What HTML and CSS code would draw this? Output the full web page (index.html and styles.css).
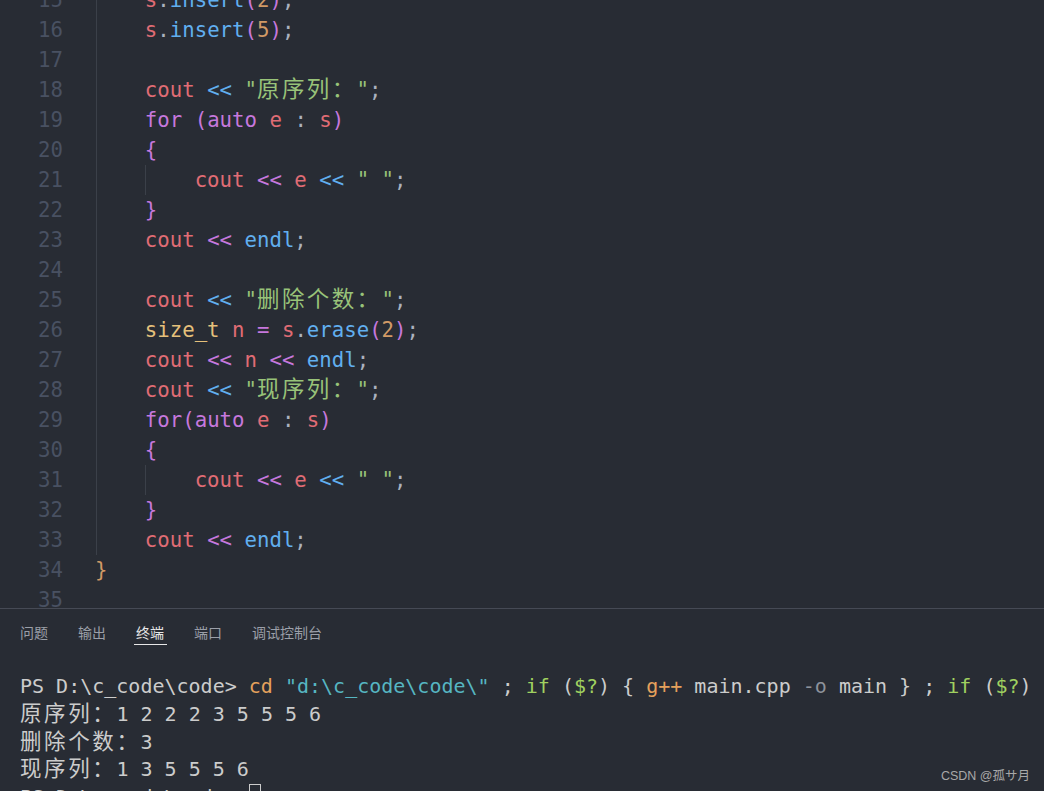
FILE: index.html
```html
<!DOCTYPE html>
<html lang="zh-CN">
<head>
<meta charset="utf-8">
<title>code</title>
<link rel="stylesheet" href="styles.css">
</head>
<body>
<div class="editor">
  <div class="lines">
    <div class="line"><span class="ln">15</span><span class="code g1">    <span class="v">s</span><span class="p">.</span><span class="f">insert</span><span class="b2">(</span><span class="n">2</span><span class="b2">)</span><span class="p">;</span></span></div>
    <div class="line"><span class="ln">16</span><span class="code g1">    <span class="v">s</span><span class="p">.</span><span class="f">insert</span><span class="b2">(</span><span class="n">5</span><span class="b2">)</span><span class="p">;</span></span></div>
    <div class="line"><span class="ln">17</span><span class="code g1"> </span></div>
    <div class="line"><span class="ln">18</span><span class="code g1">    <span class="v">cout</span> <span class="f">&lt;&lt;</span> <span class="s">"<span class="cjk">原序列：</span>"</span><span class="p">;</span></span></div>
    <div class="line"><span class="ln">19</span><span class="code g1">    <span class="k">for</span> <span class="b2">(</span><span class="k">auto</span> <span class="v">e</span> <span class="p">:</span> <span class="v">s</span><span class="b2">)</span></span></div>
    <div class="line"><span class="ln">20</span><span class="code g1">    <span class="b2">{</span></span></div>
    <div class="line"><span class="ln">21</span><span class="code g1 g2">        <span class="v">cout</span> <span class="k">&lt;&lt;</span> <span class="v">e</span> <span class="f">&lt;&lt;</span> <span class="s">" "</span><span class="p">;</span></span></div>
    <div class="line"><span class="ln">22</span><span class="code g1">    <span class="b2">}</span></span></div>
    <div class="line"><span class="ln">23</span><span class="code g1">    <span class="v">cout</span> <span class="k">&lt;&lt;</span> <span class="f">endl</span><span class="p">;</span></span></div>
    <div class="line"><span class="ln">24</span><span class="code g1"> </span></div>
    <div class="line"><span class="ln">25</span><span class="code g1">    <span class="v">cout</span> <span class="f">&lt;&lt;</span> <span class="s">"<span class="cjk">删除个数：</span>"</span><span class="p">;</span></span></div>
    <div class="line"><span class="ln">26</span><span class="code g1">    <span class="t">size_t</span> <span class="v">n</span> <span class="k">=</span> <span class="v">s</span><span class="p">.</span><span class="f">erase</span><span class="b2">(</span><span class="n">2</span><span class="b2">)</span><span class="p">;</span></span></div>
    <div class="line"><span class="ln">27</span><span class="code g1">    <span class="v">cout</span> <span class="k">&lt;&lt;</span> <span class="v">n</span> <span class="k">&lt;&lt;</span> <span class="f">endl</span><span class="p">;</span></span></div>
    <div class="line"><span class="ln">28</span><span class="code g1">    <span class="v">cout</span> <span class="f">&lt;&lt;</span> <span class="s">"<span class="cjk">现序列：</span>"</span><span class="p">;</span></span></div>
    <div class="line"><span class="ln">29</span><span class="code g1">    <span class="k">for</span><span class="b2">(</span><span class="k">auto</span> <span class="v">e</span> <span class="p">:</span> <span class="v">s</span><span class="b2">)</span></span></div>
    <div class="line"><span class="ln">30</span><span class="code g1">    <span class="b2">{</span></span></div>
    <div class="line"><span class="ln">31</span><span class="code g1 g2">        <span class="v">cout</span> <span class="k">&lt;&lt;</span> <span class="v">e</span> <span class="f">&lt;&lt;</span> <span class="s">" "</span><span class="p">;</span></span></div>
    <div class="line"><span class="ln">32</span><span class="code g1">    <span class="b2">}</span></span></div>
    <div class="line"><span class="ln">33</span><span class="code g1">    <span class="v">cout</span> <span class="k">&lt;&lt;</span> <span class="f">endl</span><span class="p">;</span></span></div>
    <div class="line"><span class="ln">34</span><span class="code"><span class="b1">}</span></span></div>
    <div class="line"><span class="ln">35</span><span class="code"> </span></div>
  </div>
</div>
<div class="panel">
  <div class="tabs">
    <span class="tab">问题</span>
    <span class="tab">输出</span>
    <span class="tab active">终端</span>
    <span class="tab">端口</span>
    <span class="tab">调试控制台</span>
  </div>
  <div class="term">
    <div class="tline">PS D:\c_code\code&gt; <span class="tc">cd</span> <span class="ts">"d:\c_code\code\"</span> ; <span class="tg">if</span> (<span class="tg">$?</span>) { <span class="tc">g++</span> main.cpp <span class="td">-o</span> main } ; <span class="tg">if</span> (<span class="tg">$?</span>) { .\main }</div>
    <div class="tline"><span class="tcjk">原序列：</span>1 2 2 2 3 5 5 5 6</div>
    <div class="tline"><span class="tcjk">删除个数：</span>3</div>
    <div class="tline"><span class="tcjk">现序列：</span>1 3 5 5 5 6</div>
    <div class="tline">PS D:\c_code\code&gt; <span class="cursor"> </span></div>
  </div>
  <div class="mark">CSDN @孤サ月</div>
</div>
</body>
</html>
```
FILE: styles.css
```css
html, body {
  margin: 0;
  padding: 0;
}
body {
  width: 1044px;
  height: 791px;
  overflow: hidden;
  background: #282c34;
  display: flex;
  flex-direction: column;
}
.editor {
  height: 608px;
  flex: none;
  overflow: hidden;
  font-family: "DejaVu Sans Mono", "Noto Sans CJK SC", monospace;
  font-size: 20.7px;
}
.lines {
  margin-top: -15px;
}
.line {
  display: flex;
  height: 30px;
  line-height: 30px;
}
.ln {
  width: 63px;
  flex: none;
  text-align: right;
  color: #495162;
}
.code {
  margin-left: 32px;
  flex: 1;
  white-space: pre;
  color: #abb2bf;
  background-repeat: no-repeat;
}
.g1 {
  background-image: linear-gradient(#3b4049, #3b4049);
  background-size: 1px 100%;
  background-position: 0.5px 0;
}
.g1.g2 {
  background-image: linear-gradient(#3b4049, #3b4049), linear-gradient(#3b4049, #3b4049);
  background-size: 1px 100%, 1px 100%;
  background-position: 0.5px 0, calc(4ch + 0.5px) 0;
}
.v { color: #e06c75; }
.k { color: #c678dd; }
.f { color: #61afef; }
.n { color: #d19a66; }
.t { color: #e5c07b; }
.s { color: #98c379; }
.p { color: #abb2bf; }
.b1 { color: #d19a66; }
.b2 { color: #c678dd; }
.cjk {
  font-family: "Noto Sans CJK SC", sans-serif;
  font-size: 22.5px;
  line-height: 20px;
  letter-spacing: 2.4px;
}
.panel {
  flex: 1;
  position: relative;
  border-top: 1px solid #464a55;
  overflow: hidden;
}
.tabs {
  display: flex;
  gap: 25px;
  padding: 13px 0 0 17.5px;
  font-family: "Noto Sans CJK SC", sans-serif;
  font-size: 14px;
}
.tab {
  line-height: 20px;
  padding: 0 2.5px 2px;
  border-bottom: 1px solid transparent;
  color: #9b9fa8;
}
.tab.active {
  color: #e7e7e7;
  border-bottom-color: #e7e7e7;
}
.term {
  margin-top: 28px;
  padding-left: 20px;
  font-family: "DejaVu Sans Mono", "Noto Sans CJK SC", monospace;
  font-size: 20px;
  color: #cccccc;
}
.tline {
  height: 27.75px;
  line-height: 27.75px;
  white-space: pre;
}
.tcjk {
  font-family: "Noto Sans CJK SC", sans-serif;
  font-size: 21.5px;
  line-height: 20px;
  letter-spacing: 2.6px;
}
.tc { color: #e5a15c; }
.ts { color: #56b6c2; }
.tg { color: #a0d160; }
.td { color: #8d929b; }
.cursor {
  display: inline-block;
  width: 10px;
  height: 27px;
  border: 1px solid #cccccc;
  vertical-align: top;
}
.mark {
  position: absolute;
  right: 14px;
  bottom: 7px;
  font-family: "Liberation Sans", "Noto Sans CJK SC", sans-serif;
  font-size: 12.5px;
  color: #a8a8a8;
}
```
